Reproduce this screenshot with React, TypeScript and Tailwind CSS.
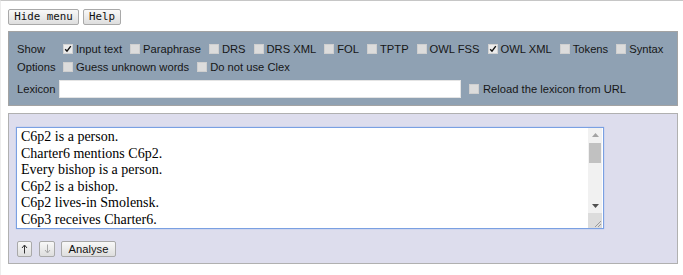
import React from "react";

function Box({ checked = false }: { checked?: boolean }) {
  return (
    <span
      className={`inline-flex items-center justify-center w-[10px] h-[10px] shrink-0 border ${
        checked ? "bg-[#ececec] border-[#d2d2d2]" : "bg-[#dcdcdc] border-[#cfcfcf]"
      }`}
    >
      {checked && (
        <svg width="8" height="8" viewBox="0 0 8 8">
          <path d="M1.2 4.2 L3 6.2 L6.8 1.2" fill="none" stroke="#111" strokeWidth="1.4" />
        </svg>
      )}
    </span>
  );
}

function Opt({ label, checked = false, first = false }: { label: string; checked?: boolean; first?: boolean }) {
  return (
    <span className={`inline-flex items-center shrink-0 ${first ? "ml-[4px]" : "ml-[8px]"}`}>
      <Box checked={checked} />
      <span className="ml-[3px] whitespace-nowrap">{label}</span>
    </span>
  );
}

const btn =
  "h-[16px] border border-[#a9a9a9] rounded-[2px] bg-gradient-to-b from-[#f8f8f8] to-[#dedede] flex items-center justify-center text-[#111] shrink-0";

export default function App() {
  return (
    <div className="min-h-screen bg-white border-t border-[#c6c6c6] border-l border-l-[#ececec] font-['Liberation_Sans',Arial,sans-serif] text-[11.2px] text-[#161616]">
      <div className="flex pl-[7px] pt-[8px] gap-[4px] font-['DejaVu_Sans_Mono',monospace] text-[10.8px]">
        <button className={`${btn} w-[71px]`}>Hide menu</button>
        <button className={`${btn} w-[38px]`}>Help</button>
      </div>

      <div className="mt-[6px] ml-[7px] mr-[5px] border border-[#a3a3a3] bg-[#8fa1b3] pl-[8px] pt-[8px] pb-[7px]">
        <div className="flex items-center h-[18px]">
          <span className="w-[42px] shrink-0">Show</span>
          <Opt label="Input text" checked first />
          <Opt label="Paraphrase" />
          <Opt label="DRS" />
          <Opt label="DRS XML" />
          <Opt label="FOL" />
          <Opt label="TPTP" />
          <Opt label="OWL FSS" />
          <Opt label="OWL XML" checked />
          <Opt label="Tokens" />
          <Opt label="Syntax" />
        </div>
        <div className="flex items-center h-[18px]">
          <span className="w-[42px] shrink-0">Options</span>
          <Opt label="Guess unknown words" first />
          <Opt label="Do not use Clex" />
        </div>
        <div className="flex items-center h-[18px] mt-[4px]">
          <span className="w-[42px] shrink-0">Lexicon</span>
          <span className="w-[402px] h-[18px] shrink-0 bg-white border border-[#e4e4e4]" />
          <span className="inline-flex items-center ml-[8px]">
            <Box />
            <span className="ml-[4px] whitespace-nowrap">Reload the lexicon from URL</span>
          </span>
        </div>
      </div>

      <div className="mt-[7px] ml-[7px] mr-[5px] border border-[#b0b0b0] bg-[#dddded] px-[7px] pt-[13px] pb-[6px]">
        <div className="w-[588px] h-[102px] bg-white border border-[#7aa0e2] shadow-[0_0_1px_#8fb0ea] flex">
          <div className="flex-1 pl-[4px] pt-[1px] font-['Liberation_Serif','Times_New_Roman',serif] text-[14px] leading-[16.5px] text-black">
            <div>C6p2 is a person.</div>
            <div>Charter6 mentions C6p2.</div>
            <div>Every bishop is a person.</div>
            <div>C6p2 is a bishop.</div>
            <div>C6p2 lives-in Smolensk.</div>
            <div>C6p3 receives Charter6.</div>
          </div>
          <div className="w-[14px] mr-[1px] bg-[#f1f1f1] flex flex-col items-center">
            <div className="h-[14px] flex items-center justify-center">
              <svg width="7" height="4" viewBox="0 0 7 4">
                <path d="M0 4 L3.5 0 L7 4 Z" fill="#a3a3a3" />
              </svg>
            </div>
            <div className="w-[12px] h-[20px] bg-[#c1c1c1] mt-[1px]" />
            <div className="flex-1" />
            <div className="h-[14px] flex items-center justify-center">
              <svg width="7" height="4" viewBox="0 0 7 4">
                <path d="M0 0 L3.5 4 L7 0 Z" fill="#505050" />
              </svg>
            </div>
            <div className="w-[14px] h-[15px] bg-[#dcdcdc] flex items-end justify-end">
              <svg width="10" height="10" viewBox="0 0 10 10">
                <path d="M9 3 L3 9 M9 6 L6 9" stroke="#9a9a9a" strokeWidth="1" />
              </svg>
            </div>
          </div>
        </div>
        <div className="flex mt-[12px]">
          <button className={`${btn} w-[15px] ml-[1px]`}>
            <svg width="7" height="10" viewBox="0 0 7 10">
              <path d="M3.5 9.5 V1.5 M1 4 L3.5 1 L6 4" fill="none" stroke="#333" strokeWidth="1" />
            </svg>
          </button>
          <button className={`${btn} w-[16px] ml-[7px]`}>
            <svg width="7" height="10" viewBox="0 0 7 10">
              <path d="M3.5 0.5 V8.5 M1 6 L3.5 9 L6 6" fill="none" stroke="#a8a8a8" strokeWidth="1" />
            </svg>
          </button>
          <button className={`${btn} w-[55px] ml-[6px]`}>Analyse</button>
        </div>
      </div>
    </div>
  );
}
